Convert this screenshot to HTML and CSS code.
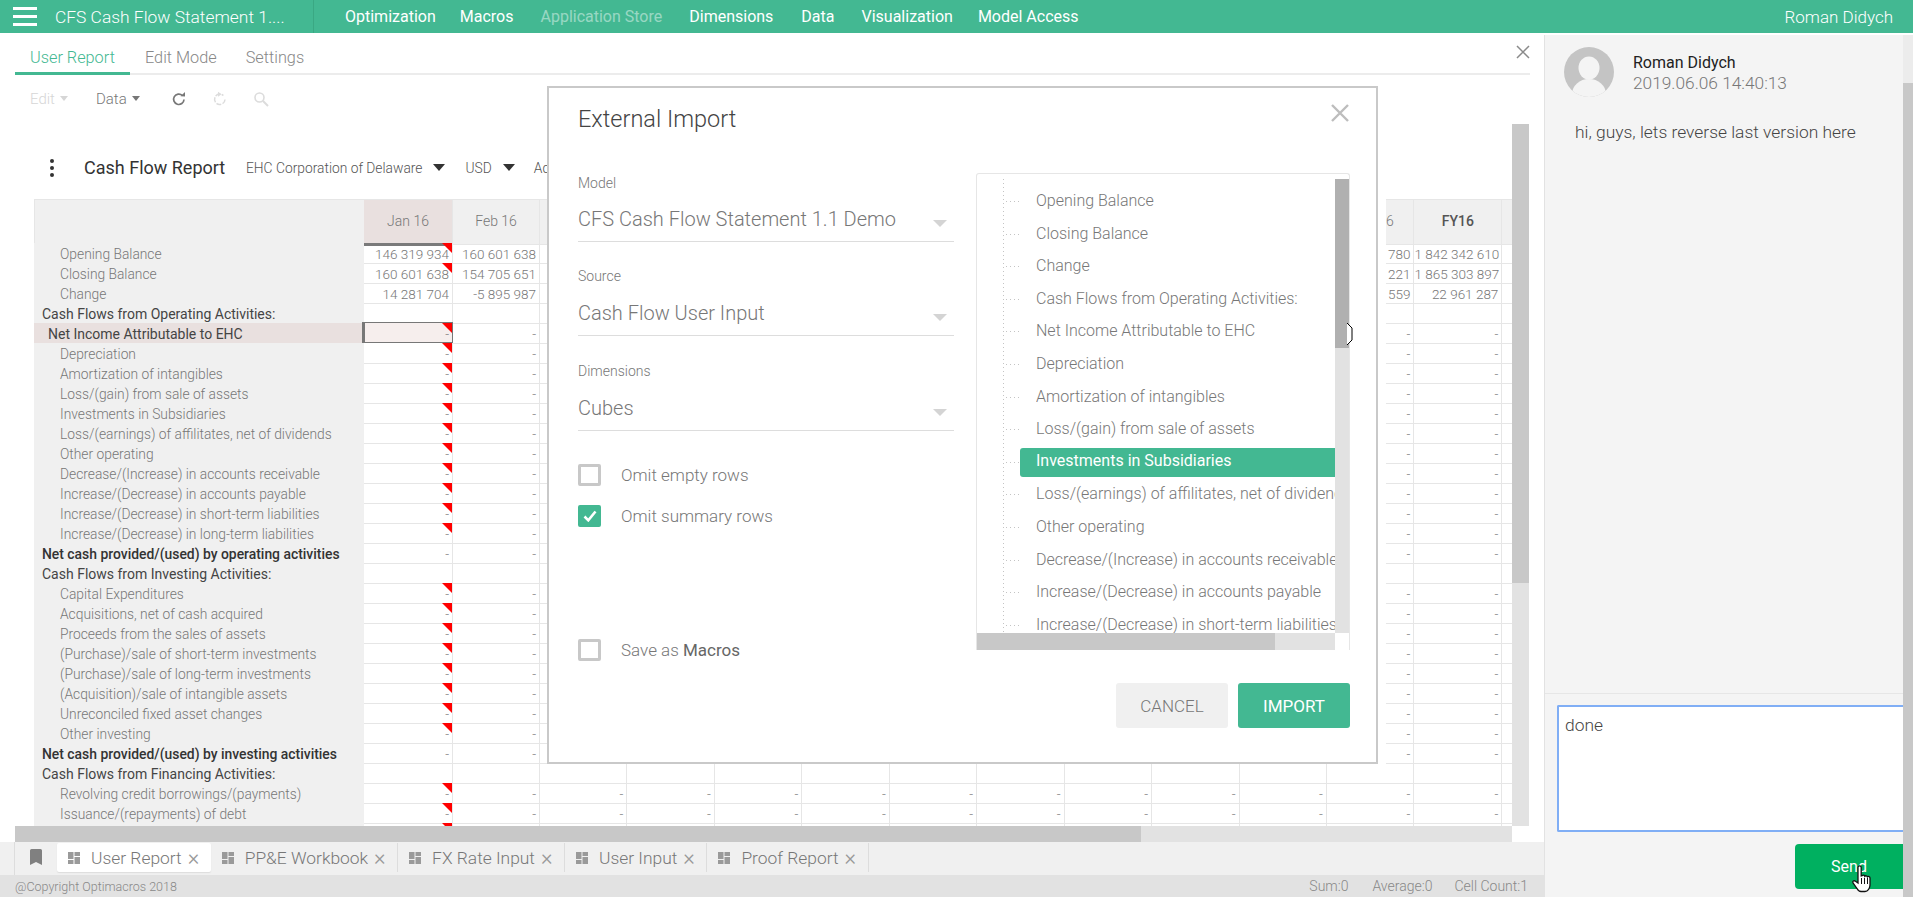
FILE: index.html
```html
<!DOCTYPE html>
<html lang="en">
<head>
<meta charset="UTF-8">
<title>Optimacros</title>
<link rel="stylesheet" href="styles.css">
</head>
<body>
<header class="topbar">
  <div class="burger"><span></span><span></span><span></span></div>
  <div class="model-title">CFS Cash Flow Statement 1....</div>
  <nav class="topnav">
    <a class="nav-opt">Optimization</a>
    <a class="nav-mac">Macros</a>
    <a class="nav-app">Application Store</a>
    <a class="nav-dim">Dimensions</a>
    <a class="nav-data">Data</a>
    <a class="nav-vis">Visualization</a>
    <a>Model Access</a>
  </nav>
  <div class="top-user">Roman Didych</div>
</header>

<div class="main">
  <section class="workspace">
    <div class="tabs">
      <a class="tab active">User Report</a>
      <a class="tab tab-edit">Edit Mode</a>
      <a class="tab tab-settings">Settings</a>
      <svg class="close-main" width="14" height="14" viewBox="0 0 14 14"><path d="M1 1l12 12M13 1L1 13" stroke="#8a8a8a" stroke-width="1.5" fill="none"/></svg>
    </div>
    <div class="toolbar">
      <span class="tool tool-edit">Edit<i class="mini-caret"></i></span>
      <span class="tool tool-data">Data<i class="mini-caret"></i></span>
      <svg class="ico ico-refresh" width="16" height="16" viewBox="0 0 16 16"><path d="M13 8.5a5.2 5.2 0 1 1-1.6-4" stroke="#777" stroke-width="1.7" fill="none"/><path d="M9.5 5.2L14 5.6V1z" fill="#777"/></svg>
      <svg class="ico ico-redo" width="16" height="16" viewBox="0 0 16 16"><path d="M13 8.5a5.2 5.2 0 1 1-1.6-4" stroke="#dcdcdc" stroke-width="1.5" fill="none" stroke-dasharray="5 1.4"/><path d="M6 .8v5l3.6-2.5z" fill="#dcdcdc"/></svg>
      <svg class="ico ico-search" width="16" height="16" viewBox="0 0 16 16"><circle cx="6.5" cy="6.5" r="4.5" stroke="#dcdcdc" stroke-width="1.6" fill="none"/><path d="M10 10l5 5" stroke="#dcdcdc" stroke-width="2"/></svg>
    </div>

    <div class="sheet-wrap">
      <div class="sheet">
        <div class="report-head">
          <div class="dots"><span></span><span></span><span></span></div>
          <div class="report-title">Cash Flow Report</div>
          <div class="filter">EHC Corporation of Delaware<i class="caret"></i></div>
          <div class="filter filter-usd">USD<i class="caret"></i></div>
          <div class="filter filter-ac">Ac</div>
        </div>
        <div class="grid" id="grid"></div>
      </div>
      <div class="vscroll"><div class="vthumb"></div></div>
    </div>
    <div class="hscroll"><div class="hthumb"></div></div>

    <div class="sheet-tabs">
      <div class="bookmark"><svg width="12" height="16" viewBox="0 0 12 16"><path d="M0 1.5Q0 0 1.5 0h9Q12 0 12 1.5V16L6 13 0 16z" fill="#808080"/></svg></div>
      <div class="sheet-tab active"><svg class="tab-ico" width="12" height="12" viewBox="0 0 12 12"><path d="M0 0h5.500v7H0zM6.500 0H12v4H6.500zM0 8h5.500v4H0zM6.500 5H12v7H6.500z" fill="#9a9a9a"/></svg><span>User Report</span><b>×</b></div>
      <div class="sheet-tab"><svg class="tab-ico" width="12" height="12" viewBox="0 0 12 12"><path d="M0 0h5.500v7H0zM6.500 0H12v4H6.500zM0 8h5.500v4H0zM6.500 5H12v7H6.500z" fill="#9a9a9a"/></svg><span>PP&amp;E Workbook</span><b>×</b></div>
      <div class="sheet-tab"><svg class="tab-ico" width="12" height="12" viewBox="0 0 12 12"><path d="M0 0h5.500v7H0zM6.500 0H12v4H6.500zM0 8h5.500v4H0zM6.500 5H12v7H6.500z" fill="#9a9a9a"/></svg><span>FX Rate Input</span><b>×</b></div>
      <div class="sheet-tab"><svg class="tab-ico" width="12" height="12" viewBox="0 0 12 12"><path d="M0 0h5.500v7H0zM6.500 0H12v4H6.500zM0 8h5.500v4H0zM6.500 5H12v7H6.500z" fill="#9a9a9a"/></svg><span>User Input</span><b>×</b></div>
      <div class="sheet-tab"><svg class="tab-ico" width="12" height="12" viewBox="0 0 12 12"><path d="M0 0h5.500v7H0zM6.500 0H12v4H6.500zM0 8h5.500v4H0zM6.500 5H12v7H6.500z" fill="#9a9a9a"/></svg><span>Proof Report</span><b>×</b></div>
    </div>
    <footer class="statusbar">
      <span class="copyright">@Copyright Optimacros 2018</span>
      <span class="stat stat-sum">Sum:0</span>
      <span class="stat stat-avg">Average:0</span>
      <span class="stat">Cell Count:1</span>
    </footer>
  </section>

  <aside class="chat">
    <div class="chat-head">
      <svg class="avatar" width="50" height="50" viewBox="0 0 50 50"><defs><clipPath id="round"><circle cx="25" cy="25" r="25"/></clipPath></defs><g clip-path="url(#round)"><rect width="50" height="50" fill="#c4c4c4"/><ellipse cx="25" cy="21" rx="10.5" ry="11.5" fill="#f4f4f4"/><ellipse cx="25" cy="47" rx="17" ry="15" fill="#f4f4f4"/></g></svg>
      <div>
        <div class="chat-name">Roman Didych</div>
        <div class="chat-date">2019.06.06 14:40:13</div>
      </div>
    </div>
    <p class="chat-msg">hi, guys, lets reverse last version here</p>
    <div class="chat-form">
      <div class="chat-input">done</div>
      <div class="send-row"><button class="send" type="button">Send</button></div>
    </div>
  </aside>
  <div class="page-scroll"><div class="page-thumb"></div></div>
</div>

<div class="modal">
  <div class="modal-head">
    <h2>External Import</h2>
    <svg class="close-modal" width="18" height="18" viewBox="0 0 18 18"><path d="M1 1l16 16M17 1L1 17" stroke="#bdbdbd" stroke-width="2.4" fill="none"/></svg>
  </div>
  <div class="modal-body">
    <div class="modal-left">
      <div class="field"><label>Model</label><div class="select">CFS Cash Flow Statement 1.1 Demo<i></i></div></div>
      <div class="field field-src"><label>Source</label><div class="select">Cash Flow User Input<i></i></div></div>
      <div class="field field-dim"><label>Dimensions</label><div class="select">Cubes<i></i></div></div>
      <div class="check check-first"><span class="box"></span>Omit empty rows</div>
      <div class="check"><span class="box on"><svg width="14" height="12" viewBox="0 0 14 12"><path d="M1.5 6.5l3.8 3.8L12.5 1.5" stroke="#fff" stroke-width="2.6" fill="none"/></svg></span>Omit summary rows</div>
      <div class="check check-save"><span class="box"></span><span>Save as <em>Macros</em></span></div>
    </div>
    <div class="tree-box">
      <div class="tree-inner">
        <ul class="tree" id="tree"></ul>
        <div class="tree-vscroll"><div class="tree-vthumb"></div></div>
      </div>
      <div class="tree-hscroll"><div class="tree-hthumb"></div></div>
    </div>
  </div>
  <div class="modal-foot">
    <button class="btn btn-cancel" type="button">CANCEL</button>
    <button class="btn btn-import" type="button">IMPORT</button>
  </div>
</div>

<svg class="cursor-arrow" width="6" height="22" viewBox="0 0 6 22"><path d="M0 0l5 5v12l-5 5" fill="#fff" stroke="#000"/></svg>
<svg class="cursor-hand" width="22" height="28" viewBox="0 0 22 28"><path d="M7 2.5a1.6 1.6 0 0 1 3.2 0V11l1-.3a1.5 1.5 0 0 1 2.6.6 1.5 1.5 0 0 1 2.6.6 1.5 1.5 0 0 1 2.6 1V20c0 3-2 6.500-5 6.500H10c-2 0-3-1-4-3l-4-5.500c-1-1.500 1-3 2.500-1.800L7 18z" fill="#fff" stroke="#111" stroke-width="1.300"/><path d="M10.500 13v6M13.500 13v6M16.500 13v6" stroke="#111"/></svg>

<script>
  // [label, row type, red corner in Jan]
  const rows = [
    ['Opening Balance', 'item', 1],
    ['Closing Balance', 'item', 1],
    ['Change', 'item', 0],
    ['Cash Flows from Operating Activities:', 'head', 0],
    ['Net Income Attributable to EHC', 'sel', 1],
    ['Depreciation', 'item', 1],
    ['Amortization of intangibles', 'item', 1],
    ['Loss/(gain) from sale of assets', 'item', 1],
    ['Investments in Subsidiaries', 'item', 1],
    ['Loss/(earnings) of affilitates, net of dividends', 'item', 1],
    ['Other operating', 'item', 1],
    ['Decrease/(Increase) in accounts receivable', 'item', 1],
    ['Increase/(Decrease) in accounts payable', 'item', 1],
    ['Increase/(Decrease) in short-term liabilities', 'item', 1],
    ['Increase/(Decrease) in long-term liabilities', 'item', 1],
    ['Net cash provided/(used) by operating activities', 'total', 0],
    ['Cash Flows from Investing Activities:', 'head', 0],
    ['Capital Expenditures', 'item', 1],
    ['Acquisitions, net of cash acquired', 'item', 1],
    ['Proceeds from the sales of assets', 'item', 1],
    ['(Purchase)/sale of short-term investments', 'item', 1],
    ['(Purchase)/sale of long-term investments', 'item', 1],
    ['(Acquisition)/sale of intangible assets', 'item', 1],
    ['Unreconciled fixed asset changes', 'item', 1],
    ['Other investing', 'item', 1],
    ['Net cash provided/(used) by investing activities', 'total', 0],
    ['Cash Flows from Financing Activities:', 'head', 0],
    ['Revolving credit borrowings/(payments)', 'item', 1],
    ['Issuance/(repayments) of debt', 'item', 1],
    ['', 'last', 1]
  ];
  const months = ['Jan 16', 'Feb 16', '', '', '', '', '', '', '', '', '', '6', 'FY16', ''];
  const values = {
    0: {0: '146 319 934', 1: '160 601 638', 11: '780', 12: '1 842 342 610'},
    1: {0: '160 601 638', 1: '154 705 651', 11: '221', 12: '1 865 303 897'},
    2: {0: '14 281 704', 1: '-5 895 987', 11: '559', 12: '22 961 287'}
  };

  let html = '<div class="row row-top"><div class="label"></div>';
  months.forEach((m, i) => {
    let cls = 'col-head';
    if (i === 0) cls += ' cur';
    if (i === 11) cls += ' dec';
    if (i === 12) cls += ' fy';
    html += '<div class="' + cls + '">' + m + '</div>';
  });
  html += '</div>';

  rows.forEach((r, n) => {
    html += '<div class="row ' + r[1] + '"><div class="label">' + r[0] + '</div>';
    months.forEach((m, i) => {
      // columns Mar-Nov sit behind the dialog down to row 26
      const covered = n < 26 && i >= 2 && i <= 10;
      let text = r[1] === 'head' || r[1] === 'last' || i === 13 || covered ? '' : '-';
      if (values[n]) text = values[n][i] || '';
      let cls = 'cell';
      if (i === 0 && r[2]) cls += ' flag';
      if (i === 0 && r[1] === 'sel') cls += ' picked';
      html += '<div class="' + cls + '">' + text + '</div>';
    });
    html += '</div>';
  });
  document.getElementById('grid').innerHTML = html;

  let tree = '';
  rows.slice(0, 14).forEach((r) => {
    tree += '<li' + (r[0] === 'Investments in Subsidiaries' ? ' class="on"' : '') + '><span>' + r[0] + '</span></li>';
  });
  document.getElementById('tree').innerHTML = tree;
</script>
</body>
</html>
```
FILE: styles.css
```css
* {
  box-sizing: border-box;
}
body {
  margin: 0;
  width: 1913px;
  height: 897px;
  overflow: hidden;
  position: relative;
  font-family: Roboto, "Liberation Sans", sans-serif;
  font-weight: 300;
  background-color: #fff;
  color: #666;
}

/* top bar */
.topbar {
  height: 33px;
  background-color: #43b892;
  color: #fff;
  display: flex;
  align-items: center;
  font-weight: 400;
}
.burger {
  width: 24px;
  margin-left: 13px;
  display: flex;
  flex-direction: column;
  gap: 5px;
}
.burger span {
  height: 3px;
  background-color: #fff;
}
.model-title {
  width: 258px;
  margin-left: 18px;
  font-size: 17.4px;
  font-weight: 300;
  white-space: nowrap;
}
.topnav {
  height: 33px;
  padding-left: 31px;
  border-left: 1px solid #3aa883;
  display: flex;
  align-items: center;
  font-size: 16px;
  font-weight: 400;
}
.topnav a {
  white-space: nowrap;
}
.nav-opt { margin-right: 24px; }
.nav-mac { margin-right: 27px; }
.nav-app { margin-right: 27px; opacity: 0.45; }
.nav-dim { margin-right: 28px; }
.nav-data { margin-right: 27px; }
.nav-vis { margin-right: 25px; }
.top-user {
  margin-left: auto;
  margin-right: 20px;
  font-size: 17px;
  font-weight: 300;
}

.main {
  margin-top: 2px;
  height: 862px;
  display: flex;
}

/* left side */
.workspace {
  width: 1544px;
  display: flex;
  flex-direction: column;
}
.tabs {
  height: 40px;
  margin: 0 14px 0 15px;
  padding-top: 12px;
  border-bottom: 2px solid #ececec;
  display: flex;
  font-size: 16.3px;
  color: #888;
}
.tab {
  white-space: nowrap;
}
.tab.active {
  color: #43b892;
  width: 115px;
  height: 40px;
  border-bottom: 3px solid #43b892;
  margin-top: -12px;
  padding: 13px 0 0 15px;
}
.tab-edit { padding-top: 1px; margin-left: 15px; height: 20px; }
.tab-settings { padding-top: 1px; margin-left: 29px; height: 20px; }
.close-main {
  margin-left: auto;
  margin-top: -2px;
}
.toolbar {
  height: 49px;
  display: flex;
  align-items: center;
  padding-left: 30px;
  padding-bottom: 2px;
  font-size: 15px;
}
.tool {
  display: flex;
  align-items: center;
  gap: 5px;
  color: #777;
}
.tool-edit { color: #d6d6d6; width: 66px; }
.tool-data { width: 75px; }
.mini-caret {
  width: 0;
  height: 0;
  border: 4px solid transparent;
  border-top: 5px solid currentColor;
  border-bottom: 0;
}
.ico-refresh { margin-right: 25px; }
.ico-redo { margin-right: 25px; }

.sheet-wrap {
  height: 702px;
  display: flex;
  padding-left: 15px;
}
.sheet {
  width: 1497px;
  overflow: hidden;
  padding-left: 19px;
}
.report-head {
  height: 75px;
  padding-top: 12px;
  display: flex;
  align-items: center;
  white-space: nowrap;
}
.dots {
  display: flex;
  flex-direction: column;
  gap: 3px;
  width: 50px;
  padding-left: 16px;
}
.dots span {
  width: 4px;
  height: 4px;
  border-radius: 50%;
  background-color: #333;
}
.report-title {
  width: 162px;
  font-size: 18px;
  font-weight: 400;
  color: #333;
}
.filter {
  font-size: 13.8px;
  color: #555;
  display: flex;
  align-items: center;
}
.caret {
  width: 0;
  height: 0;
  margin-left: 11px;
  border: 6px solid transparent;
  border-top: 7px solid #333;
  border-bottom: 0;
}
.filter-usd { margin-left: 20px; }
.filter-ac { margin-left: 19px; }

.grid {
  border-top: 1px solid #e6e6e6;
  font-size: 13.5px;
  width: 1478px;
}
.row {
  display: grid;
  grid-template-columns: 330px 89px 87px repeat(10, 87.45px) 88px 88px;
  height: 20px;
}
.row-top {
  height: 43px;
}
.row-top .label {
  border-left: 1px solid #e6e6e6;
  background-color: #f0f0f0;
  border-bottom: 1px solid #e6e6e6;
}
.col-head {
  background-color: #f0f0f0;
  border-right: 1px solid #e6e6e6;
  border-bottom: 1px solid #e6e6e6;
  text-align: center;
  font-size: 14px;
  line-height: 43px;
  color: #777;
}
.col-head.cur {
  background-color: #e9e0df;
  border-bottom: 3px solid #7a7a7a;
  margin-bottom: -1px;
}
.col-head.dec {
  text-align: left;
  padding-left: 59px;
}
.col-head.fy {
  font-weight: 500;
  color: #555;
}
.label {
  background-color: #f0f0f0;
  border-bottom: 1px solid #e4e4e4;
  padding: 2px 0 0 26px;
  font-size: 13.8px;
  line-height: 18px;
  color: #777;
  white-space: nowrap;
}
.head .label,
.total .label {
  padding-left: 8px;
  font-size: 14px;
  font-weight: 400;
  color: #444;
}
.total .label {
  font-size: 13.9px;
  font-weight: 500;
  color: #333;
}
.sel .label {
  padding-left: 14px;
  background-color: #e9e0df;
  font-size: 14px;
  font-weight: 400;
  color: #444;
}
.cell {
  position: relative;
  border-right: 1px solid #e6e6e6;
  border-bottom: 1px solid #e6e6e6;
  text-align: right;
  padding: 2px 3px 0 0;
  line-height: 18px;
  white-space: nowrap;
  color: #777;
}
.cell.flag::after {
  content: "";
  position: absolute;
  top: 0;
  right: 0;
  border-top: 10px solid #ff0000;
  border-left: 10px solid transparent;
}
.cell.picked {
  background-color: #f6eeed;
  border: 1px solid #777;
  border-left-width: 3px;
  margin-left: -2px;
  margin-top: -1px;
  height: 21px;
}

.vscroll {
  width: 17px;
  background-color: #e2e2e2;
}
.vthumb {
  height: 459px;
  background-color: #c8c8c8;
}
.hscroll {
  height: 16px;
  width: 1497px;
  margin-left: 15px;
  background-color: #e2e2e2;
}
.hthumb {
  width: 1126px;
  height: 16px;
  background-color: #c8c8c8;
}

.sheet-tabs {
  height: 33px;
  background-color: #f0f0f0;
  display: flex;
  padding-left: 14px;
  font-size: 17.4px;
  color: #777;
}
.bookmark {
  width: 43px;
  padding: 7px 0 0 15px;
  border-left: 1px solid #ddd;
}
.sheet-tab {
  height: 29px;
  margin-top: 1px;
  padding: 0 11.5px 0 11px;
  display: flex;
  align-items: center;
  border-right: 1px solid #ddd;
  white-space: nowrap;
}
.sheet-tab.active {
  background-color: #fff;
  border-right: 0;
  border-radius: 2px;
  box-shadow: 0 1px 1px #ddd;
}
.tab-ico {
  margin-right: 11px;
}
.sheet-tab b {
  margin-left: 6px;
  font-weight: 300;
  font-size: 22px;
  line-height: 22px;
  color: #999;
}
.statusbar {
  height: 22px;
  background-color: #e2e2e2;
  display: flex;
  align-items: center;
  padding: 0 16px 0 15px;
  color: #888;
}
.copyright {
  margin-right: auto;
  font-size: 12.5px;
}
.stat {
  font-size: 14px;
}
.stat-sum { margin-right: 24px; }
.stat-avg { margin-right: 22px; }

/* chat on the right */
.chat {
  width: 359px;
  background-color: #f4f4f4;
  border-left: 1px solid #e2e2e2;
  display: flex;
  flex-direction: column;
}
.chat-head {
  display: flex;
  gap: 19px;
  padding: 12px 0 0 19px;
  height: 62px;
}
.chat-name {
  margin-top: 5px;
  font-size: 16px;
  font-weight: 400;
  color: #222;
  line-height: 21px;
}
.chat-date {
  font-size: 17.3px;
  color: #777;
  line-height: 21px;
}
.chat-msg {
  margin: 25px 0 0 30px;
  font-size: 17.4px;
  line-height: 20px;
  color: #444;
}
.chat-form {
  margin-top: auto;
  height: 204px;
  border-top: 1px solid #e6e6e6;
  padding: 11px 0 0 12px;
}
.chat-input {
  height: 127px;
  background-color: #fff;
  border: 2px solid #80aef5;
  border-right: 0;
  border-radius: 2px 0 0 2px;
  padding: 8px 6px;
  font-size: 17.4px;
  color: #444;
}
.send-row {
  display: flex;
  justify-content: flex-end;
  margin-top: 12px;
}
.send {
  width: 108px;
  height: 45px;
  border: 0;
  border-radius: 4px 0 0 4px;
  background-color: #00b060;
  color: #fff;
  font-family: Roboto, sans-serif;
  font-size: 16px;
  font-weight: 400;
}
.page-scroll {
  width: 10px;
  background-color: #c8c8c8;
}
.page-thumb {
  height: 48px;
  background-color: #ececec;
}

/* modal */
.modal {
  position: absolute;
  left: 547px;
  top: 86px;
  width: 831px;
  height: 678px;
  background-color: #fff;
  border: 2px solid #c9c9c9;
  box-shadow: 8px 0 0 #fff;
  padding: 0 26px 0 29px;
}
.modal-head {
  height: 85px;
  display: flex;
  justify-content: space-between;
  padding-top: 16px;
}
.modal-head h2 {
  margin: 0;
  font-size: 23.5px;
  line-height: 30px;
  font-weight: 300;
  color: #444;
}
.close-modal {
  margin-right: 1px;
}
.modal-body {
  display: flex;
  height: 477px;
}
.modal-left {
  width: 377px;
  margin-right: 22px;
}
.field {
  height: 94px;
}
.field label {
  display: block;
  font-size: 14px;
  line-height: 20px;
  color: #777;
}
.select {
  position: relative;
  margin-top: 11px;
  height: 38px;
  line-height: 30px;
  font-size: 20px;
  color: #777;
  border-bottom: 1px solid #ddd;
}
.field-src { margin-top: -1px; margin-bottom: 1px; }
.field-src .select { margin-top: 12px; }
.field-dim .select { margin-top: 12px; }
.select i {
  position: absolute;
  right: 7px;
  top: 16px;
  border: 7px solid transparent;
  border-top: 7px solid #d4d4d4;
  border-bottom: 0;
}
.check {
  height: 22px;
  margin-top: 19px;
  display: flex;
  align-items: center;
  gap: 20px;
  font-size: 17px;
  color: #777;
}
.check-first { margin-top: 9px; }
.check-save { margin-top: 112px; }
.check em {
  font-style: normal;
  font-weight: 400;
  color: #666;
}
.box {
  width: 23px;
  height: 22px;
  border: 3px solid #c8c8c8;
  border-radius: 2px;
  display: flex;
  align-items: center;
  justify-content: center;
}
.box.on {
  background-color: #43b892;
  border-color: #43b892;
}
.tree-box {
  width: 374px;
  height: 477px;
  border: 1px solid #e6e6e6;
  border-bottom: 0;
  border-radius: 3px 3px 0 0;
  display: flex;
  flex-direction: column;
  padding-top: 5px;
}
.tree-inner {
  height: 454px;
  display: flex;
  overflow: hidden;
}
.tree {
  list-style: none;
  margin: 0 0 0 26px;
  padding: 6px 0 0;
  width: 332px;
  background: repeating-linear-gradient(to bottom, #c4c4c4 0 1px, transparent 1px 4px) left top / 1px 100% no-repeat;
  overflow: hidden;
  font-size: 16px;
  color: #777;
  flex-shrink: 0;
}
.tree li {
  position: relative;
  height: 32.6px;
  padding-left: 33px;
  line-height: 32px;
  white-space: nowrap;
  overflow: hidden;
}
.tree li::before {
  content: "";
  position: absolute;
  left: 3px;
  top: 16px;
  width: 15px;
  height: 1px;
  background: repeating-linear-gradient(to right, #c4c4c4 0 1px, transparent 1px 4px);
}
.tree li span {
  display: block;
  overflow: hidden;
}
.tree li.on::after {
  content: "";
  position: absolute;
  left: 17px;
  right: 0;
  top: 2px;
  height: 29px;
  background-color: #43b892;
  border-radius: 3px 0 0 3px;
}
.tree li.on span {
  position: relative;
  top: -1px;
  z-index: 1;
  color: #fff;
  font-weight: 400;
}
.tree-vscroll {
  width: 15px;
  background-color: #e2e2e2;
}
.tree-vthumb {
  height: 169px;
  background-color: #b0b0b0;
}
.tree-hscroll {
  width: 358px;
  height: 17px;
  background-color: #e2e2e2;
}
.tree-hthumb {
  width: 298px;
  height: 17px;
  background-color: #c8c8c8;
}
.modal-foot {
  margin-top: 33px;
  display: flex;
  justify-content: flex-end;
  gap: 10px;
}
.btn {
  width: 112px;
  height: 45px;
  border: 0;
  border-radius: 3px;
  font-family: Roboto, sans-serif;
  font-size: 17px;
  font-weight: 300;
}
.btn-cancel {
  background-color: #f0f0f0;
  color: #777;
}
.btn-import {
  background-color: #43b892;
  color: #fff;
  font-weight: 400;
}

/* mouse pointers caught in the screenshot */
.cursor-arrow {
  position: absolute;
  left: 1347px;
  top: 323px;
}
.cursor-hand {
  position: absolute;
  left: 1851px;
  top: 865px;
}
```
